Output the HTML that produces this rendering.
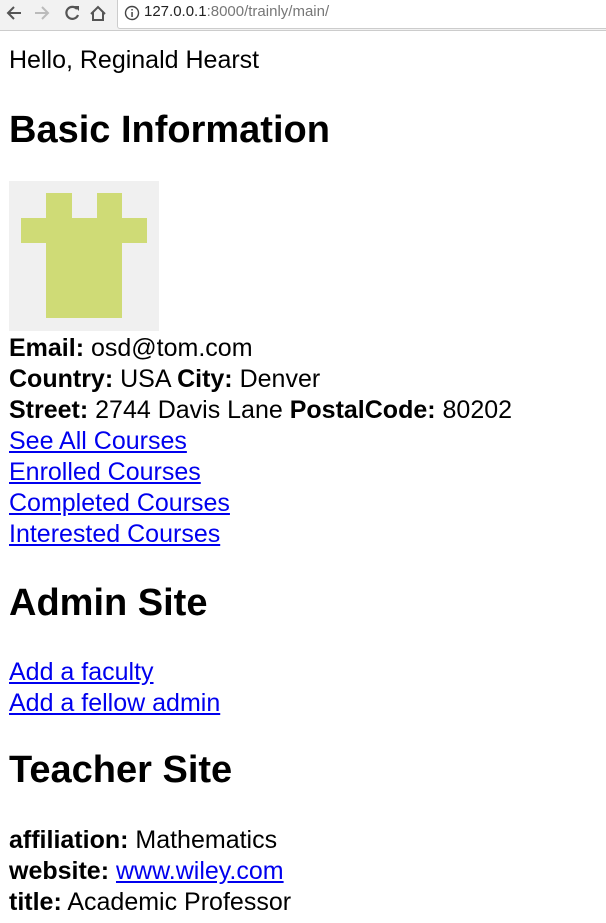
<!DOCTYPE html>
<html><head><style>
body{margin:0;width:606px;height:923px;overflow:hidden;background:#fff;font-family:"Liberation Sans",sans-serif;color:#000;position:relative}
.bar{position:absolute;left:0;top:0;width:606px;height:30px;background:#f2f2f2;border-bottom:1px solid #ccc}
.url{position:absolute;left:117px;top:0;width:500px;height:28px;background:#fff;border:1px solid #ccc;border-top:none;border-radius:0 0 0 3px}
.url span{position:absolute;left:26px;top:3px;font-size:15px;color:#222}
.url i{font-style:normal;color:#777}
.t{position:absolute;left:9px;font-size:25px;line-height:31px;white-space:nowrap;margin-top:1px}
.h{position:absolute;left:9px;font-size:38px;font-weight:bold;line-height:40px;white-space:nowrap}
a{color:#0000ee;text-decoration:underline}
</style></head><body>
<div class="bar">
<svg width="110" height="30" style="position:absolute;left:0;top:0">
<path d="M21 13H9M14 7L8 13l6 6" stroke="#555" stroke-width="2" fill="none"/>
<path d="M47 13H35M42 7l6 6-6 6" stroke="#bbb" stroke-width="2" fill="none"/>
<path d="M77 9a6 6 0 1 0 1 6" stroke="#555" stroke-width="2.2" fill="none"/><path d="M74 6h5v5z" fill="#555"/>
<path d="M91 14l7-7 7 7M93 12v8h10v-8" stroke="#555" stroke-width="2" fill="none"/>
</svg>
<div class="url"><svg width="16" height="16" style="position:absolute;left:6px;top:5px"><circle cx="8" cy="8" r="6.5" stroke="#444" stroke-width="1.4" fill="none"/><rect x="7.3" y="7" width="1.5" height="5" fill="#444"/><rect x="7.3" y="4" width="1.5" height="1.5" fill="#444"/></svg><span>127.0.0.1<i>:8000/trainly/main/</i></span></div>
</div>
<div class="t" style="top:44px">Hello, Reginald Hearst</div>
<div class="h" style="top:110px">Basic Information</div>
<svg width="150" height="150" style="position:absolute;left:9px;top:181px"><rect width="150" height="150" fill="#f0f0f0"/><g fill="#cfdb76"><rect x="37" y="12" width="26" height="26"/><rect x="88" y="12" width="25" height="26"/><rect x="12" y="37" width="126" height="25"/><rect x="37" y="61" width="76" height="76"/></g></svg>
<div class="t" style="top:332px"><b>Email:</b> osd@tom.com</div>
<div class="t" style="top:363px"><b>Country:</b> USA <b>City:</b> Denver</div>
<div class="t" style="top:394px"><b>Street:</b> 2744 Davis Lane <b>PostalCode:</b> 80202</div>
<div class="t" style="top:425px"><a>See All Courses</a></div>
<div class="t" style="top:456px"><a>Enrolled Courses</a></div>
<div class="t" style="top:487px"><a>Completed Courses</a></div>
<div class="t" style="top:518px"><a>Interested Courses</a></div>
<div class="h" style="top:583px">Admin Site</div>
<div class="t" style="top:656px"><a>Add a faculty</a></div>
<div class="t" style="top:687px"><a>Add a fellow admin</a></div>
<div class="h" style="top:750px">Teacher Site</div>
<div class="t" style="top:824px"><b>affiliation:</b> Mathematics</div>
<div class="t" style="top:855px"><b>website:</b> <a>www.wiley.com</a></div>
<div class="t" style="top:886px"><b>title:</b> Academic Professor</div>
</body></html>
